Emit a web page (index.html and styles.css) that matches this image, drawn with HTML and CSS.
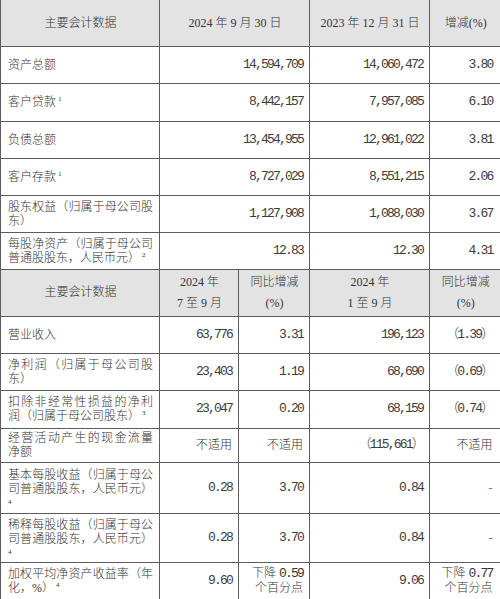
FILE: index.html
```html
<!DOCTYPE html>
<html lang="zh-CN">
<head>
<meta charset="utf-8">
<title>主要会计数据</title>
<link rel="stylesheet" href="styles.css">
</head>
<body>
<table class="report">
  <colgroup>
    <col class="c1"><col class="c2"><col class="c3"><col class="c4"><col class="c5">
  </colgroup>
  <tr class="r46 first">
    <th>主要会计数据</th>
    <th colspan="2">2024 年 9 月 30 日</th>
    <th>2023 年 12 月 31 日</th>
    <th>增减(%)</th>
  </tr>
  <tr class="r37">
    <td class="label">资产总额</td>
    <td colspan="2" class="num">14,594,709</td>
    <td class="num">14,060,472</td>
    <td class="num">3.80</td>
  </tr>
  <tr class="r38">
    <td class="label">客户贷款<sup class="fn">1</sup></td>
    <td colspan="2" class="num">8,442,157</td>
    <td class="num">7,957,085</td>
    <td class="num">6.10</td>
  </tr>
  <tr class="r37">
    <td class="label">负债总额</td>
    <td colspan="2" class="num">13,454,955</td>
    <td class="num">12,961,022</td>
    <td class="num">3.81</td>
  </tr>
  <tr class="r37">
    <td class="label">客户存款<sup class="fn">1</sup></td>
    <td colspan="2" class="num">8,727,029</td>
    <td class="num">8,551,215</td>
    <td class="num">2.06</td>
  </tr>
  <tr class="r37">
    <td class="label"><span class="jl">股东权益（归属于母公司股</span>东）</td>
    <td colspan="2" class="num">1,127,908</td>
    <td class="num">1,088,030</td>
    <td class="num">3.67</td>
  </tr>
  <tr class="r37">
    <td class="label"><span class="jl">每股净资产（归属于母公司</span>普通股股东，人民币元）<sup class="fn">2</sup></td>
    <td colspan="2" class="num">12.83</td>
    <td class="num">12.30</td>
    <td class="num">4.31</td>
  </tr>
  <tr class="r47 head2">
    <th>主要会计数据</th>
    <th>2024 年<br>7 至 9 月</th>
    <th>同比增减<br>(%)</th>
    <th>2024 年<br>1 至 9 月</th>
    <th>同比增减<br>(%)</th>
  </tr>
  <tr class="r37">
    <td class="label">营业收入</td>
    <td class="num">63,776</td>
    <td class="num">3.31</td>
    <td class="num">196,123</td>
    <td class="num">（1.39）</td>
  </tr>
  <tr class="r37">
    <td class="label"><span class="jl">净利润（归属于母公司股</span>东）</td>
    <td class="num">23,403</td>
    <td class="num">1.19</td>
    <td class="num">68,690</td>
    <td class="num">（0.69）</td>
  </tr>
  <tr class="r38">
    <td class="label"><span class="jl">扣除非经常性损益的净利</span>润（归属于母公司股东）<sup class="fn">3</sup></td>
    <td class="num">23,047</td>
    <td class="num">0.20</td>
    <td class="num">68,159</td>
    <td class="num">（0.74）</td>
  </tr>
  <tr class="r34">
    <td class="label"><span class="jl">经营活动产生的现金流量</span>净额</td>
    <td class="text">不适用</td>
    <td class="text">不适用</td>
    <td class="num">（115,661）</td>
    <td class="text">不适用</td>
  </tr>
  <tr class="r51">
    <td class="label tall"><span class="jl">基本每股收益（归属于母公</span><span class="jl">司普通股股东，人民币元）</span><span class="fnline">4</span></td>
    <td class="num">0.28</td>
    <td class="num">3.70</td>
    <td class="num">0.84</td>
    <td class="text dash">-</td>
  </tr>
  <tr class="r49">
    <td class="label tall"><span class="jl">稀释每股收益（归属于母公</span><span class="jl">司普通股股东，人民币元）</span><span class="fnline">4</span></td>
    <td class="num">0.28</td>
    <td class="num">3.70</td>
    <td class="num">0.84</td>
    <td class="text dash">-</td>
  </tr>
  <tr class="r37">
    <td class="label"><span class="jl">加权平均净资产收益率（年</span>化，%）<sup class="fn">4</sup></td>
    <td class="num">9.60</td>
    <td class="text tight">下降 <span class="mono">0.59</span><br>个百分点</td>
    <td class="num">9.06</td>
    <td class="text tight">下降 <span class="mono">0.77</span><br>个百分点</td>
  </tr>
</table>
</body>
</html>
```

FILE: styles.css
```css
html, body {
  margin: 0;
  padding: 0;
  background: #ffffff;
  overflow: hidden;
}

body {
  color: #333333;
  font-family: "Liberation Serif", "Noto Sans CJK SC", serif;
  font-size: 12px;
}

.report {
  border-collapse: collapse;
  table-layout: fixed;
  width: 500px;
}

.c1 { width: 159px; }
.c2 { width: 79px; }
.c3 { width: 71px; }
.c4 { width: 120px; }
.c5 { width: 71px; }

.report th,
.report td {
  border: 1px solid #5c5c5c;
  padding: 0 6px 0 7px;
  vertical-align: middle;
  line-height: 14px;
  font-weight: 300;
  overflow: hidden;
}

.report th:last-child,
.report td:last-child {
  border-right: none;
}

.report td.num:last-child,
.report td.text:last-child {
  padding-right: 8px;
}

.first th {
  border-top: none;
}

.report th {
  background: #e3e3e3;
  text-align: center;
}

.head2 th {
  line-height: 21px;
}

.r34 { height: 34px; }
.r37 { height: 37px; }
.r38 { height: 38px; }
.r46 { height: 46px; }
.r47 { height: 47px; }
.r49 { height: 49px; }
.r51 { height: 51px; }

.label {
  text-align: left;
}

.jl {
  display: block;
  text-align: justify;
  text-align-last: justify;
}

.tall {
  line-height: 16px;
}

.fnline {
  display: block;
  font-size: 7px;
  line-height: 12px;
}

.fn {
  font-size: 7px;
  line-height: 0;
  vertical-align: 5px;
  margin-left: 2px;
}

.num {
  text-align: right;
  color: #3c3c3c;
  font-family: "Liberation Mono", "Noto Sans CJK SC", monospace;
  font-size: 13px;
  letter-spacing: -1.8px;
}

.mono {
  font-family: "Liberation Mono", monospace;
  font-size: 13px;
  letter-spacing: -1.8px;
}

.text {
  text-align: right;
}

.tight {
  line-height: 13px;
}

.dash {
  color: #777777;
}
```
